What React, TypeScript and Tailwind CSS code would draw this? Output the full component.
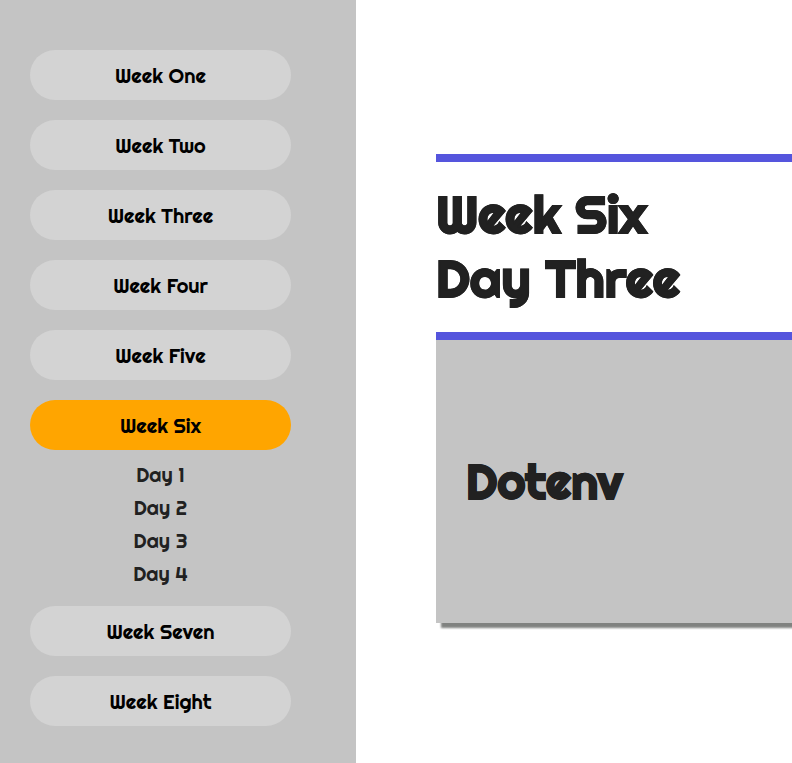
type Week = { label: string; active?: boolean };

const weeks: Week[] = [
  { label: "Week One" },
  { label: "Week Two" },
  { label: "Week Three" },
  { label: "Week Four" },
  { label: "Week Five" },
  { label: "Week Six", active: true },
  { label: "Week Seven" },
  { label: "Week Eight" },
];

const days = ["Day 1", "Day 2", "Day 3", "Day 4"];

function WeekItem({ week }: { week: Week }) {
  return (
    <li>
      <button
        className={`flex h-[50px] w-full items-center justify-center rounded-full pt-0.5 text-xl font-normal text-black ${week.active ? "bg-[#ffa500]" : "bg-[#d3d3d3]"}`}
      >
        {week.label}
      </button>
      {week.active && (
        <ul className="-mb-1 pt-2 text-center text-xl leading-[33px] font-normal">
          {days.map((day) => (
            <li key={day}>{day}</li>
          ))}
        </ul>
      )}
    </li>
  );
}

export default function App() {
  return (
    <div className="flex h-[763px] w-full overflow-hidden bg-white font-['Righteous','Lato',sans-serif] text-[#212121]">
      <nav className="w-[356px] shrink-0 bg-[#c4c4c4] pt-[50px] pr-[65px] pl-[30px]">
        <ul className="flex flex-col gap-5">
          {weeks.map((week) => (
            <WeekItem key={week.label} week={week} />
          ))}
        </ul>
      </nav>
      <main className="min-w-0 flex-1 pt-[154px] pl-20">
        <h1 className="h-[186px] border-y-8 border-[#5555dd] pt-5 text-[52px] leading-[64px] font-bold whitespace-nowrap [-webkit-text-stroke:0.3px_#212121]">
          <span className="block">Week Six</span>
          <span className="block">Day Three</span>
        </h1>
        <section className="flex h-[283px] items-center bg-[#c4c4c4] pl-[30px] shadow-[5px_5px_2px_#808280]">
          <h2 className="text-5xl font-bold [-webkit-text-stroke:0.3px_#212121]">Dotenv</h2>
        </section>
      </main>
    </div>
  );
}
